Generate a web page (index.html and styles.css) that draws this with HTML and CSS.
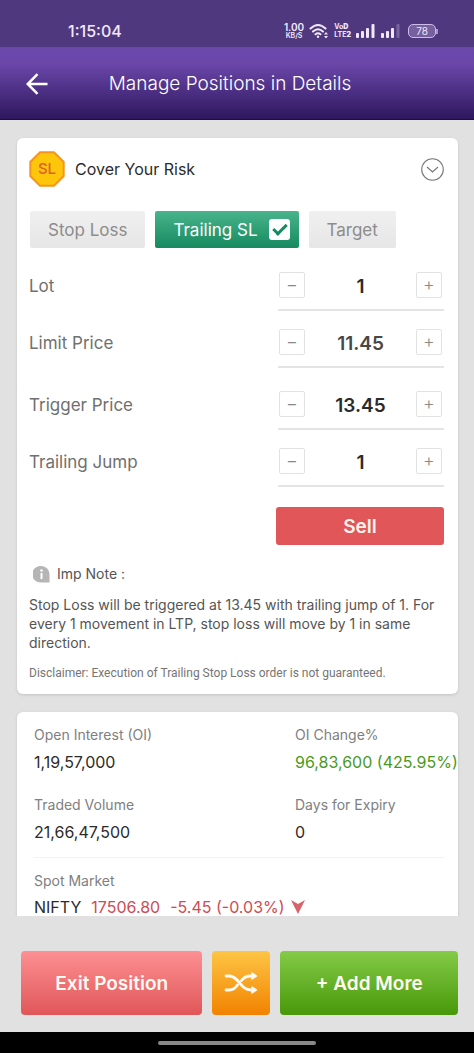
FILE: index.html
```html
<!DOCTYPE html>
<html lang="en">
<head>
<meta charset="utf-8">
<meta name="viewport" content="width=device-width, initial-scale=1">
<title>Manage Positions in Details</title>
<link rel="stylesheet" href="styles.css">
</head>
<body>
<div class="status-bar">
  <span class="clock">1:15:04</span>
  <div class="status-icons">
    <div class="speed"><span class="speed-value">1.00</span><span class="speed-unit">KB/S</span></div>
    <svg class="wifi" width="20" height="16" viewBox="0 0 20 16" fill="none" stroke="currentColor" stroke-width="2" stroke-linecap="round">
      <path d="M1.500 5.500Q9 -1.500 16.500 5.500M4 8.500Q9 4 14 8.500M6.500 11.300Q9 9.300 11.500 11.300"/>
      <circle cx="9" cy="13.800" r="1.200" fill="currentColor" stroke="none"/>
      <path d="M15 11.500l2-2.500 2 2.500zM15 13l2 2.500 2-2.500z" fill="currentColor" stroke="none"/>
    </svg>
    <div class="volte"><span>Vo<b>D</b></span><span>LTE<b>2</b></span></div>
    <svg width="20" height="15" viewBox="0 0 20 15" fill="currentColor">
      <rect x="0" y="10" width="3" height="5" rx="1"/><rect x="5" y="8" width="3" height="7" rx="1"/><rect x="10" y="5" width="3" height="10" rx="1"/><rect x="15.500" y="1" width="3" height="14" rx="1"/>
    </svg>
    <svg width="20" height="15" viewBox="0 0 20 15" fill="currentColor">
      <rect x="0" y="10" width="3" height="5" rx="1"/><rect x="5" y="8" width="3" height="7" rx="1"/><rect x="10" y="5" width="3" height="10" rx="1"/><rect x="15.500" y="1" width="3" height="14" rx="1" opacity=".25"/>
    </svg>
    <div class="battery"><span>78</span></div>
  </div>
</div>

<header class="app-bar">
  <button class="back" type="button" aria-label="Back">
    <svg width="22" height="22" viewBox="0 0 22 22" fill="none" stroke="currentColor" stroke-width="2.500"><path d="M21.500 11H2M11.500 1.200L1.700 11l9.800 9.800"/></svg>
  </button>
  <h1>Manage Positions in Details</h1>
</header>

<main class="content">
  <section class="card risk">
    <div class="risk-head">
      <svg class="sl-badge" width="36" height="36" viewBox="0 0 36 36">
        <path d="M11 1.300h14L34.700 11v14L25 34.700H11L1.300 25V11z" fill="#fdc60a" stroke="#f7941d" stroke-width="2"/>
        <text x="18" y="23" text-anchor="middle">SL</text>
      </svg>
      <h2>Cover Your Risk</h2>
      <button class="collapse" type="button" aria-label="Collapse">
        <svg width="23" height="23" viewBox="0 0 23 23" fill="none" stroke="currentColor" stroke-width="1.100"><circle cx="11.500" cy="11.500" r="10.800"/><path d="M6 9l5.500 5L17 9"/></svg>
      </button>
    </div>

    <div class="tabs">
      <button class="tab" type="button">Stop Loss</button>
      <label class="tab active">Trailing SL <input class="tick" type="checkbox" checked></label>
      <button class="tab" type="button">Target</button>
    </div>

    <div class="fields">
      <div class="field">
        <label for="lot">Lot</label>
        <div class="stepper"><button type="button" aria-label="Decrease lot">−</button><input id="lot" type="text" value="1"><button type="button" aria-label="Increase lot">+</button></div>
      </div>
      <div class="field">
        <label for="limit">Limit Price</label>
        <div class="stepper"><button type="button" aria-label="Decrease limit price">−</button><input id="limit" class="soft" type="text" value="11.45"><button type="button" aria-label="Increase limit price">+</button></div>
      </div>
      <div class="field spaced">
        <label for="trigger">Trigger Price</label>
        <div class="stepper"><button type="button" aria-label="Decrease trigger price">−</button><input id="trigger" type="text" value="13.45"><button type="button" aria-label="Increase trigger price">+</button></div>
      </div>
      <div class="field">
        <label for="jump">Trailing Jump</label>
        <div class="stepper"><button type="button" aria-label="Decrease trailing jump">−</button><input id="jump" type="text" value="1"><button type="button" aria-label="Increase trailing jump">+</button></div>
      </div>
    </div>

    <button class="sell" type="button">Sell</button>

    <div class="note-head">
      <svg width="17" height="17" viewBox="0 0 17 17"><path d="M8.500 0a8.300 8.300 0 1 0 0 16.500H16.500V8.300A8.200 8.200 0 0 0 8.500 0z" fill="#b5b5b5"/><circle cx="8.500" cy="4.500" r="1.300" fill="#fff"/><path d="M8.500 7v6" fill="none" stroke="#fff" stroke-width="2"/></svg>
      <span>Imp Note :</span>
    </div>
    <p class="note">Stop Loss will be triggered at 13.45 with trailing jump of 1. For every 1 movement in LTP, stop loss will move by 1 in same direction.</p>
    <p class="disclaimer">Disclaimer: Execution of Trailing Stop Loss order is not guaranteed.</p>
  </section>

  <section class="card market">
    <dl class="stats">
      <div><dt>Open Interest (OI)</dt><dd>1,19,57,000</dd></div>
      <div><dt>OI Change%</dt><dd class="up">96,83,600 (425.95%)</dd></div>
      <div><dt>Traded Volume</dt><dd>21,66,47,500</dd></div>
      <div><dt>Days for Expiry</dt><dd>0</dd></div>
    </dl>
    <div class="spot">
      <div class="spot-label">Spot Market</div>
      <div class="spot-line"><span>NIFTY</span><span class="down">17506.80</span><span class="down">-5.45 (-0.03%)</span>
        <svg width="14" height="14" viewBox="0 0 14 14"><path d="M0 0l7 4 7-4-7 14z" fill="#d9636b"/></svg>
      </div>
    </div>
  </section>
</main>

<footer class="actions">
  <button class="action exit" type="button">Exit Position</button>
  <button class="action swap" type="button" aria-label="Switch position">
    <svg width="34" height="24" viewBox="0 0 34 24" fill="none" stroke="currentColor" stroke-width="2.800" stroke-linecap="round" stroke-linejoin="round">
      <path d="M2 5H5.500C15 5 16 19 27 19M2 19H5.500C9.500 19 11.500 17 13.500 14M17.500 9.500C19.500 6.500 22 5 27 5"/>
      <path d="M28 2l4.500 3L28 8zM28 16l4.500 3-4.500 3z" fill="currentColor" stroke-width="1.500"/>
    </svg>
  </button>
  <button class="action add" type="button">+ Add More</button>
</footer>
<div class="nav-bar"><span class="nav-handle"></span></div>
</body>
</html>
```
FILE: styles.css
```css
*, *::before, *::after { box-sizing: border-box; }

body {
  margin: 0;
  height: 100vh;
  display: flex;
  flex-direction: column;
  overflow: hidden;
  background: #e1e1e1;
  color: #2b2b2b;
  font-family: Inter, "Liberation Sans", sans-serif;
}

button, input { font: inherit; color: inherit; margin: 0; padding: 0; border: 0; background: none; }
button { cursor: pointer; }
h1, h2, p, dl, dd { margin: 0; font-weight: 400; }
svg { display: block; flex: none; }

/* Device status bar */
.status-bar {
  display: flex;
  justify-content: space-between;
  align-items: center;
  height: 47px;
  padding: 14px 38px 0 68px;
  background: #50387f;
  color: #f1e8fb;
}
.clock { font-size: 16px; font-weight: 500; }
.status-icons { display: flex; align-items: center; gap: 5px; }
.speed { display: flex; flex-direction: column; align-items: center; font-weight: 600; }
.speed-value { font-size: 10px; line-height: 10px; }
.speed-unit { font-size: 7px; line-height: 8px; }
.volte { display: flex; flex-direction: column; font-size: 7px; font-weight: 700; line-height: 8px; }
.battery {
  position: relative;
  width: 28px;
  height: 14px;
  margin-left: 2px;
  border: 1px solid #cdbce6;
  border-radius: 5px;
  background: #76609f;
  font-size: 10px;
  line-height: 12px;
  text-align: center;
}
.battery::after {
  content: "";
  position: absolute;
  top: 4px;
  right: -3px;
  width: 2px;
  height: 5px;
  background: #a894c8;
}

/* Title bar */
.app-bar {
  display: grid;
  grid-template-columns: 26px 1fr 26px;
  align-items: center;
  height: 73px;
  padding: 0 40px 0 26px;
  background: linear-gradient(#6b48ac 0, #6946a8 24%, #2f185f 98%, #1f0d47 98%);
  color: #fff;
}
.app-bar h1 { font-size: 19px; font-weight: 300; text-align: center; }

/* Scrolling content */
.content {
  flex: 1;
  min-height: 0;
  overflow: hidden;
  padding: 18px 16px 0 17px;
}
.card { border-radius: 6px; background: #fff; box-shadow: 0 1px 3px #0002; }

.risk { padding: 13px 14px 13px 12px; }
.risk-head { display: flex; align-items: center; gap: 10px; }
.risk-head h2 { flex: 1; font-size: 16px; }
.sl-badge text { font-size: 15px; font-weight: 500; fill: #e0602a; }
.collapse { color: #777; }

.tabs { display: flex; gap: 10px; margin-top: 24px; padding-left: 1px; }
.tab {
  display: flex;
  align-items: center;
  gap: 11px;
  height: 37px;
  padding: 0 18px;
  border-radius: 2px;
  background: linear-gradient(#f0f0f0, #e6e6e6);
  color: #8c8c8c;
  font-size: 17px;
}
.tab.active { padding-right: 9px; background: linear-gradient(#49b48b, #168a60); color: #fff; }
.tick {
  appearance: none;
  position: relative;
  width: 21px;
  height: 21px;
  border-radius: 3px;
  background: #fff;
}
.tick:checked::before {
  content: "";
  position: absolute;
  left: 7px;
  top: 2px;
  width: 8px;
  height: 14px;
  border: solid #168a60;
  border-width: 0 3px 3px 0;
  rotate: 45deg;
}

.fields { display: flex; flex-direction: column; gap: 18px; margin-top: 24px; }
.field { display: flex; justify-content: space-between; }
.field.spaced { margin-top: 5px; }
.field label { color: #707070; font-size: 17px; line-height: 28px; }
.stepper {
  display: flex;
  width: 166px;
  padding: 0 2px 11px 1px;
  border-bottom: 2px solid #e4e4e4;
}
.stepper button {
  flex: none;
  width: 26px;
  height: 26px;
  border: 1px solid #e2e2e2;
  border-radius: 2px;
  color: #888;
  font-size: 18px;
  font-weight: 300;
  line-height: 22px;
}
.stepper input { flex: 1; min-width: 0; height: 28px; margin-bottom: -2px; font-size: 19px; font-weight: 600; text-align: center; }
.stepper .soft { color: #484848; }

.sell {
  display: block;
  width: 168px;
  height: 38px;
  margin: 20px 0 0 auto;
  border-radius: 3px;
  background: #e15658;
  color: #fff4ec;
  font-size: 19px;
  font-weight: 600;
}

.note-head { display: flex; align-items: center; gap: 7px; margin-top: 19px; padding-left: 4px; color: #555; font-size: 14px; line-height: 20px; }
.note { margin-top: 11px; color: #555; font-size: 14px; line-height: 19px; }
.disclaimer { margin-top: 13px; color: #757575; font-family: Roboto, Inter, sans-serif; font-size: 12px; line-height: 16px; }

/* Market figures */
.market { margin-top: 18px; padding: 12px 14px 12px 17px; }
.stats { display: grid; grid-template-columns: 261px 1fr; row-gap: 16px; padding-bottom: 9px; border-bottom: 1px solid #f2f2f2; }
dt, .spot-label { color: #808080; font-size: 14px; line-height: 22px; }
dd, .spot-line { font-size: 16px; line-height: 22px; white-space: nowrap; }
dd { margin-top: 5px; height: 27px; }
.up { color: #479a1c; }
.down { color: #cf4b52; }
.spot { padding-top: 12px; }
.spot-line { display: flex; align-items: center; gap: 10px; margin-top: 4px; }
.spot-line svg { margin-left: -4px; }

/* Bottom actions */
.actions { display: grid; grid-template-columns: 182fr 58px 178fr; gap: 10px; padding: 35px 16px 17px 21px; }
.action {
  display: flex;
  align-items: center;
  justify-content: center;
  height: 64px;
  border-radius: 4px;
  color: #fffaf2;
  font-size: 19px;
  font-weight: 600;
}
.exit { background: linear-gradient(#fd9093, #e05658); }
.swap { background: linear-gradient(#fec545, #f28200); }
.add { background: linear-gradient(#84cb47, #48980a); }

.nav-bar { display: flex; justify-content: center; align-items: center; height: 21px; background: #000; }
.nav-handle { width: 158px; height: 4px; border-radius: 2px; background: #888; }
```
